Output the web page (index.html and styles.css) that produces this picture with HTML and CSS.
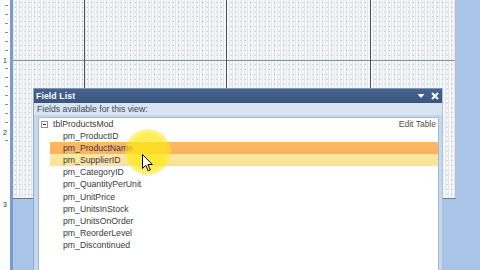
FILE: index.html
```html
<!DOCTYPE html>
<html>
<head>
<meta charset="utf-8">
<link rel="stylesheet" href="styles.css">
</head>
<body>
<div class="app">
  <div class="ruler">
    <div class="rseg"><span class="rnum">1</span></div>
    <div class="rseg"><span class="rnum">2</span></div>
    <div class="rseg"><span class="rnum">3</span></div>
  </div>
  <div class="canvas">
    <div class="grid"></div>
    <div class="fieldlist">
      <div class="fl-title">
        <span class="fl-name">Field List</span>
        <span class="fl-btns">
          <svg width="8" height="6" viewBox="0 0 8 6"><path d="M0.5 1 L7.5 1 L4 5 Z" fill="#fff"/></svg>
          <svg width="8" height="8" viewBox="0 0 8 8"><path d="M1 1 L7 7 M7 1 L1 7" stroke="#fff" stroke-width="2"/></svg>
        </span>
      </div>
      <div class="fl-sub">Fields available for this view:</div>
      <div class="fl-list">
        <div class="fl-head">
          <span class="tree-box"><span class="minus"></span></span>
          <span class="tbl">tblProductsMod</span>
          <span class="edit">Edit Table</span>
        </div>
        <div class="fl-row">pm_ProductID</div>
        <div class="fl-row sel">pm_ProductName</div>
        <div class="fl-row hov">pm_SupplierID</div>
        <div class="fl-row">pm_CategoryID</div>
        <div class="fl-row">pm_QuantityPerUnit</div>
        <div class="fl-row">pm_UnitPrice</div>
        <div class="fl-row">pm_UnitsInStock</div>
        <div class="fl-row">pm_UnitsOnOrder</div>
        <div class="fl-row">pm_ReorderLevel</div>
        <div class="fl-row">pm_Discontinued</div>
      </div>
      <div class="spot"></div>
      <svg class="cursor" width="11" height="18" viewBox="0 0 11 18">
        <path d="M0.5 0.5 L0.5 14.5 L3.8 11.3 L6.2 16.8 L8.3 15.9 L5.9 10.5 L10.3 10.5 Z" fill="#fff" stroke="#000" stroke-width="1" stroke-linejoin="miter"/>
      </svg>
    </div>
  </div>
</div>
</body>
</html>
```

FILE: styles.css
```css
html, body {
  margin: 0;
  padding: 0;
  width: 480px;
  height: 270px;
  overflow: hidden;
  background: #a9c4e7;
  font-family: "Liberation Sans", Arial, sans-serif;
}

.app {
  display: flex;
  width: 480px;
  height: 270px;
}

.ruler {
  width: 10px;
  height: 270px;
  flex: none;
  background-color: #fdfdfd;
  background-image:
    repeating-linear-gradient(180deg, transparent 0 5.5px, #8a8a8a 5.5px 6.5px, transparent 6.5px 9px);
  background-size: 3px 100%;
  background-position: 5px 0;
  background-repeat: no-repeat;
  padding-top: 57px;
  box-sizing: border-box;
  display: flex;
  flex-direction: column;
}

.rseg {
  height: 72px;
  flex: none;
  display: flex;
  justify-content: center;
}

.rnum {
  font-size: 7px;
  line-height: 8px;
  height: 8px;
  color: #333;
  background: #fdfdfd;
  padding: 0 1px;
}

.canvas {
  flex: 1;
  position: relative;
  border-left: 3px solid #7c9dcc;
  background: #a9c4e7;
}

.grid {
  width: 443px;
  height: 199px;
  box-sizing: border-box;
  border-bottom: 1px solid #6e7a88;
  border-right: 1px solid #b7c0cc;
  background-color: #f6f7f9;
  background-image:
    linear-gradient(#505050, #505050),
    linear-gradient(#505050, #505050),
    linear-gradient(#505050, #505050),
    linear-gradient(#8c9096, #8c9096),
    radial-gradient(circle, #a9adb3 0.7px, transparent 0.9px),
    repeating-linear-gradient(90deg, #e2e5ea 0 1px, transparent 1px 3px);
  background-size:
    1px 100%,
    1px 100%,
    1px 100%,
    100% 1px,
    4.8px 4.8px,
    100% 100%;
  background-position:
    71px 0,
    213px 0,
    357px 0,
    0 60px,
    0 0,
    0 0;
  background-repeat: no-repeat, no-repeat, no-repeat, no-repeat, repeat, no-repeat;
}

.fieldlist {
  position: absolute;
  left: 20px;
  top: 88px;
  width: 410px;
  height: 182px;
  background: #c6d8ee;
  border-left: 1px solid #8eaad0;
  border-right: 1px solid #a8c0de;
  box-sizing: border-box;
  display: flex;
  flex-direction: column;
}

.fl-title {
  height: 15px;
  flex: none;
  background: linear-gradient(#46648e, #3a5680);
  border-top: 1px solid #7d97bb;
  box-sizing: border-box;
  display: flex;
  align-items: center;
  justify-content: space-between;
  padding: 0 3px 0 2px;
  color: #fff;
}

.fl-name {
  font-weight: bold;
  font-size: 8.7px;
  letter-spacing: 0.1px;
}

.fl-btns {
  display: flex;
  align-items: center;
  gap: 6px;
}

.fl-btns svg {
  display: block;
}

.fl-sub {
  height: 13px;
  flex: none;
  background: #d8e4f2;
  font-size: 8.7px;
  line-height: 13px;
  color: #454a52;
  padding-left: 3px;
  border-bottom: 1px solid #c4d3e6;
  box-sizing: border-box;
}

.fl-list {
  flex: 1;
  margin: 1px 3px 0 4px;
  background: #fff;
  border: 1px solid #a7b9d1;
  border-bottom: none;
  font-size: 8.7px;
  color: #3a3a3a;
  display: flex;
  flex-direction: column;
}

.fl-head {
  height: 12.1px;
  display: flex;
  align-items: center;
  padding-left: 2px;
  padding-right: 2px;
}

.tree-box {
  width: 7px;
  height: 7px;
  box-sizing: border-box;
  border: 1px solid #8b9099;
  display: flex;
  align-items: center;
  justify-content: center;
  flex: none;
}

.minus {
  width: 3px;
  height: 1px;
  background: #333;
}

.tbl {
  margin-left: 5px;
  flex: 1;
}

.edit {
  color: #505050;
  font-size: 8.5px;
}

.fl-row {
  height: 12.1px;
  line-height: 12.1px;
  padding-left: 13px;
  margin-left: 11px;
  white-space: nowrap;
}

.fl-row.sel {
  background: linear-gradient(#fdb966, #fcb25c);
}

.fl-row.hov {
  background: linear-gradient(#fbe9a4, #f9e195);
}

.spot {
  position: absolute;
  left: 91px;
  top: 41px;
  width: 46px;
  height: 46px;
  border-radius: 50%;
  background: radial-gradient(circle, rgba(255, 232, 20, 0.8) 0, rgba(255, 232, 20, 0.7) 55%, rgba(255, 236, 60, 0.25) 85%, rgba(255, 240, 80, 0) 100%);
  pointer-events: none;
}

.cursor {
  position: absolute;
  left: 108px;
  top: 66px;
}
```
